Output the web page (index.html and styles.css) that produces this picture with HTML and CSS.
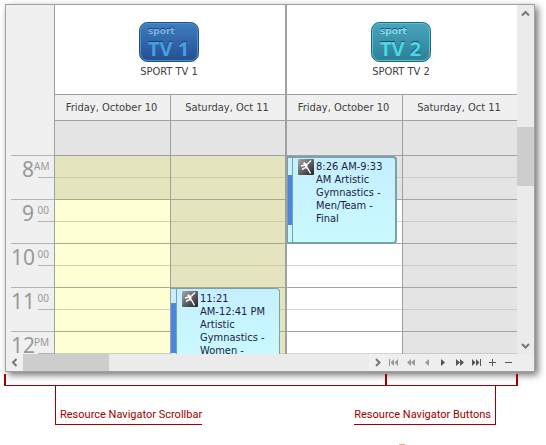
FILE: index.html
```html
<!DOCTYPE html>
<html lang="en">
   <head>
      <meta charset="UTF-8">
      <meta name="viewport" content="width=device-width, initial-scale=1.0">
      <title>Scheduler - Resource Navigator</title>
      <link rel="stylesheet" href="styles.css">
   </head>
   <body>
      <svg class="defs" aria-hidden="true">
         <symbol id="gymnast" viewBox="0 0 16 16">
            <rect width="16" height="16" rx="1" fill="url(#darkFade)"/>
            <circle cx="6.500" cy="4.500" r="1.200" fill="#fff"/>
            <path d="M3 7L7 6L9.500 5L13 1.500M7.500 6.500L8 8.500L5 9.500L4.500 11M8 8L10 10L12.500 14.500" fill="none" stroke="#fff" stroke-width="1.400"/>
            <path d="M7 6L9.500 5.500L9.500 9L7.500 8.500z" fill="#fff"/>
         </symbol>
         <linearGradient id="darkFade" x1="0" y1="0" x2="1" y2="1">
            <stop offset="0" stop-color="#aaa"/>
            <stop offset=".6" stop-color="#555"/>
            <stop offset="1" stop-color="#222"/>
         </linearGradient>
      </svg>
      <main class="scheduler">
         <div class="view">
            <div class="ruler">
               <div class="ruler-head"></div>
               <div class="hours">
                  <div class="hour"><b>8</b><sup>AM</sup></div>
                  <div class="hour"><b>9</b><sup>00</sup></div>
                  <div class="hour"><b>10</b><sup>00</sup></div>
                  <div class="hour"><b>11</b><sup>00</sup></div>
                  <div class="hour"><b>12</b><sup>PM</sup></div>
               </div>
            </div>
            <section class="resource sport1">
               <header class="resource-head">
                  <svg width="60" height="40" viewBox="0 0 60 40" aria-hidden="true">
                     <linearGradient id="blueFade" x1="0" y1="0" x2="0" y2="1">
                        <stop offset="0" stop-color="#3f7cc0"/>
                        <stop offset="1" stop-color="#254f8f"/>
                     </linearGradient>
                     <rect x=".5" y=".5" width="59" height="39" rx="8" fill="#2c5f96" stroke="#2b4f70"/>
                     <rect x="1.500" y="1.500" width="57" height="37" rx="7" fill="url(#blueFade)" stroke="#3f95dc"/>
                     <text x="9" y="12" class="logo-small" fill="#7db8f0">sport</text>
                     <text x="9" y="34" class="logo-big" fill="#44a0e2">TV 1</text>
                  </svg>
                  <h2>SPORT TV 1</h2>
               </header>
               <div class="days">
                  <div class="day">
                     <h3>Friday, October 10</h3>
                     <div class="all-day"></div>
                     <div class="slots">
                        <div class="slot off"></div><div class="slot off"></div>
                        <div class="slot"></div><div class="slot"></div>
                        <div class="slot"></div><div class="slot"></div>
                        <div class="slot"></div><div class="slot"></div>
                        <div class="slot"></div>
                     </div>
                  </div>
                  <div class="day">
                     <h3>Saturday, Oct 11</h3>
                     <div class="all-day"></div>
                     <div class="slots">
                        <div class="slot off"></div><div class="slot off"></div>
                        <div class="slot off"></div><div class="slot off"></div>
                        <div class="slot off"></div><div class="slot off"></div>
                        <div class="slot off"></div><div class="slot off"></div>
                        <div class="slot off"></div>
                        <article class="appointment late">
                           <div class="status"><i></i></div>
                           <svg width="16" height="16"><use href="#gymnast"/></svg>
                           <p>11:21<br>AM-12:41 PM<br>Artistic<br>Gymnastics -<br>Women -</p>
                        </article>
                     </div>
                  </div>
               </div>
            </section>
            <section class="resource sport2">
               <header class="resource-head">
                  <svg width="60" height="40" viewBox="0 0 60 40" aria-hidden="true">
                     <linearGradient id="tealFade" x1="0" y1="0" x2="0" y2="1">
                        <stop offset="0" stop-color="#48a5bb"/>
                        <stop offset="1" stop-color="#2e7f98"/>
                     </linearGradient>
                     <rect x=".5" y=".5" width="59" height="39" rx="8" fill="#2f8098" stroke="#2e6273"/>
                     <rect x="1.500" y="1.500" width="57" height="37" rx="7" fill="url(#tealFade)" stroke="#48c9d8"/>
                     <text x="9" y="12" class="logo-small" fill="#86e2ee">sport</text>
                     <text x="9" y="34" class="logo-big" fill="#4bd8e4">TV 2</text>
                  </svg>
                  <h2>SPORT TV 2</h2>
               </header>
               <div class="days">
                  <div class="day">
                     <h3>Friday, October 10</h3>
                     <div class="all-day"></div>
                     <div class="slots">
                        <div class="slot off"></div><div class="slot off"></div>
                        <div class="slot"></div><div class="slot"></div>
                        <div class="slot"></div><div class="slot"></div>
                        <div class="slot"></div><div class="slot"></div>
                        <div class="slot"></div>
                        <article class="appointment early selected">
                           <div class="status"><i></i></div>
                           <svg width="16" height="16"><use href="#gymnast"/></svg>
                           <p>8:26 AM-9:33<br>AM Artistic<br>Gymnastics -<br>Men/Team -<br>Final</p>
                        </article>
                     </div>
                  </div>
                  <div class="day">
                     <h3>Saturday, Oct 11</h3>
                     <div class="all-day"></div>
                     <div class="slots">
                        <div class="slot off"></div><div class="slot off"></div>
                        <div class="slot off"></div><div class="slot off"></div>
                        <div class="slot off"></div><div class="slot off"></div>
                        <div class="slot off"></div><div class="slot off"></div>
                        <div class="slot off"></div>
                     </div>
                  </div>
               </div>
            </section>
            <div class="vscroll">
               <button aria-label="Scroll up"><svg width="9" height="9"><path d="M1 6.500L4.500 3L8 6.500"/></svg></button>
               <div class="track"><div class="thumb"></div></div>
               <button aria-label="Scroll down"><svg width="9" height="9"><path d="M1 3L4.500 6.500L8 3"/></svg></button>
            </div>
         </div>
         <div class="navigator">
            <div class="hscroll">
               <button aria-label="Scroll left"><svg width="9" height="9"><path d="M6.500 1L3 4.500L6.500 8"/></svg></button>
               <div class="track"><div class="thumb"></div></div>
               <button aria-label="Scroll right"><svg width="9" height="9"><path d="M3 1L6.500 4.500L3 8"/></svg></button>
            </div>
            <div class="nav-buttons">
               <button aria-label="First" disabled><svg width="10" height="7"><path d="M0 0h1v7h-1zM5 0v7L1.500 3.500zM9 0v7L5.500 3.500z"/></svg></button>
               <button aria-label="Previous page" disabled><svg width="10" height="7"><path d="M5 0v7L1 3.500zM9 0v7L5 3.500z"/></svg></button>
               <button aria-label="Previous" disabled><svg width="10" height="7"><path d="M7 0v7L3 3.500z"/></svg></button>
               <button aria-label="Next"><svg width="10" height="7"><path d="M3 0v7L7 3.500z"/></svg></button>
               <button aria-label="Next page"><svg width="10" height="7"><path d="M1 0v7L5 3.500zM5 0v7L9 3.500z"/></svg></button>
               <button aria-label="Last"><svg width="10" height="7"><path d="M1 0v7L4.500 3.500zM5 0v7L8.500 3.500zM9 0h1v7h-1z"/></svg></button>
               <button aria-label="Add resource"><svg width="7" height="7"><path d="M0 3h7v1h-7zM3 0h1v7h-1z"/></svg></button>
               <button aria-label="Remove resource"><svg width="7" height="7"><path d="M0 3h7v1h-7z"/></svg></button>
            </div>
            <div class="corner"></div>
         </div>
      </main>
      <div class="brackets">
         <div class="bracket-bar"></div>
         <div class="bracket-buttons"></div>
      </div>
      <div class="callouts">
         <p class="callout from-left">Resource Navigator Scrollbar</p>
         <p class="callout from-right">Resource Navigator Buttons</p>
      </div>
      <div class="mark"></div>
   </body>
</html>
```
FILE: styles.css
```css
* {
box-sizing: border-box;
}
body {
font-family: "DejaVu Sans Condensed", Tahoma, sans-serif;
font-size: 11px;
line-height: 13px;
margin: 0;
padding-top: 4px;
background-color: #fff;
color: #404040;
}
h2,
h3,
p {
margin: 0;
font-size: 11px;
font-weight: normal;
}
button {
display: flex;
align-items: center;
justify-content: center;
padding: 0;
border: none;
background: none;
}
.defs {
position: absolute;
width: 0;
height: 0;
}
.scheduler {
margin: 0 11px 0 5px;
border: 1px solid #a0a0a0;
background-color: #ebebeb;
box-shadow: 3px 3px 7px rgba(0, 0, 0, 0.55);
}
.view {
display: flex;
}

/* time ruler */
.ruler {
width: 49px;
border-right: 1px solid #a0a0a0;
background-color: #f0f0f0;
}
.ruler-head {
height: 151px;
margin-left: 5px;
border-bottom: 1px solid #b4b4b4;
}
.hours {
height: 198px;
overflow: hidden;
}
.hour {
display: grid;
grid-template-columns: 23px 15px;
grid-template-rows: 22px 22px;
margin-left: 5px;
border-bottom: 1px solid #b4b4b4;
height: 44px;
color: #999;
}
.hour::after {
content: "";
grid-column: 1 / 4;
grid-row: 1;
align-self: end;
width: 16px;
height: 1px;
margin-left: 27px;
background-color: #b4b4b4;
}
.hour b {
grid-area: 1 / 1;
font-family: "Noto Sans", sans-serif;
font-size: 21px;
font-weight: normal;
line-height: 26px;
text-align: right;
}
.hour sup {
grid-area: 1 / 2;
padding-top: 4px;
font-family: "Noto Sans", sans-serif;
font-size: 10px;
line-height: 13px;
text-align: right;
vertical-align: top;
}

/* resources and days */
.resource {
flex: 1;
}
.sport1 {
box-sizing: content-box;
border-right: 2px solid #a0a0a0;
}
.resource-head {
display: flex;
flex-direction: column;
align-items: center;
gap: 3px;
height: 90px;
padding: 17px 2px 0 0;
border-bottom: 1px solid #a0a0a0;
background-color: #fff;
}
.logo-small,
.logo-big {
text-shadow: 0 -1px #1b3f70;
}
.logo-small {
font: bold 9px "DejaVu Sans", sans-serif;
}
.logo-big {
font: bold 20px "Noto Sans", sans-serif;
}
.days {
display: grid;
grid-template-columns: 116fr 114fr;
}
.day {
border-right: 1px solid #a0a0a0;
}
.day + .day {
border-right: none;
}
.day h3 {
height: 26px;
padding-right: 2px;
border-bottom: 1px solid #a0a0a0;
background-color: #f0f0f0;
line-height: 26px;
text-align: center;
white-space: nowrap;
}
.all-day {
height: 35px;
border-bottom: 1px solid #a0a0a0;
background-color: #e5e5e5;
}
.slots {
position: relative;
height: 198px;
}
.slot {
height: 22px;
border-bottom: 1px solid #d6d6d6;
background-color: #fff;
}
.slot:nth-child(even) {
border-bottom-color: #a5a5a5;
}
.slot.off {
border-bottom-color: #cbcbcb;
background-color: #e4e4e4;
}
.slot.off:nth-child(even) {
border-bottom-color: #a5a5a5;
}
.sport1 .slot {
border-bottom-color: #d3d3ae;
background-color: #ffffd5;
}
.sport1 .slot.off {
border-bottom-color: #cdcca8;
background-color: #e4e4be;
}
.sport1 .slot:nth-child(even) {
border-bottom-color: #a8a890;
}

/* appointments */
.appointment {
position: absolute;
left: 0;
right: 5px;
display: flex;
overflow: hidden;
border: 1px solid #7aa0aa;
border-radius: 0 4px 0 0;
background: linear-gradient(#c5efff, #c9f9ff);
color: #1c1c46;
}
.appointment svg {
flex: none;
margin: 2px 2px 0 5px;
}
.appointment p {
padding-top: 3px;
white-space: nowrap;
}
.selected {
border-width: 2px 2px 2px 1px;
border-radius: 0 4px 4px 0;
}
.early {
top: 0;
height: 88px;
}
.late {
top: 132px;
bottom: 0;
border-bottom: none;
border-left: none;
}
.selected svg {
margin-top: 1px;
}
.selected p {
padding-top: 2px;
}
.status {
width: 6px;
flex: none;
border-right: 1px solid #7aa0aa;
}
.status i {
display: block;
height: 50px;
margin-top: 14px;
border-top: 1px solid #5f88b0;
background-color: #4a86e0;
}
.selected .status {
width: 5px;
}
.selected .status i {
margin: 17px 0 0;
}

/* scrollbars */
.track {
flex: 1;
display: flex;
}
.thumb {
background-color: #cdcdcd;
}
.vscroll {
display: flex;
flex-direction: column;
width: 17px;
}
.vscroll button {
height: 17px;
}
.vscroll .track {
flex-direction: column;
padding-top: 105px;
}
.vscroll .thumb {
height: 59px;
}
.navigator {
display: flex;
height: 17px;
}
.hscroll {
display: flex;
flex: 1;
}
.hscroll button {
width: 17px;
background-color: #f0f0f0;
}
.hscroll .thumb {
width: 86px;
}
.vscroll path,
.hscroll path {
fill: none;
stroke: #777;
stroke-width: 2;
}
.nav-buttons {
display: grid;
grid-template-columns: repeat(8, 1fr);
width: 131px;
background-color: #eee;
fill: #555;
}
.nav-buttons button:disabled {
fill: #999;
}
.corner {
width: 17px;
background-color: #eee;
}

/* callouts below the scheduler */
.brackets {
display: flex;
height: 12px;
margin: 2px 28px 0 4px;
border-bottom: 1px solid #a00000;
}
.bracket-bar {
flex: 1;
border-left: 2px solid #a00000;
}
.bracket-buttons {
width: 133px;
border-left: 2px solid #a00000;
border-right: 2px solid #a00000;
}
.callouts {
display: flex;
justify-content: space-between;
padding: 0 50px 0 55px;
color: #a00000;
font-family: Roboto, sans-serif;
}
.callout {
height: 39px;
padding-top: 22px;
border-bottom: 1px solid #a00000;
white-space: nowrap;
}
.from-left {
padding-left: 4px;
border-left: 1px solid #a00000;
}
.from-right {
padding-right: 4px;
border-right: 1px solid #a00000;
}
.mark {
width: 6px;
height: 1px;
margin: 19px 141px 0 auto;
background-color: #dcae8c;
}
```
